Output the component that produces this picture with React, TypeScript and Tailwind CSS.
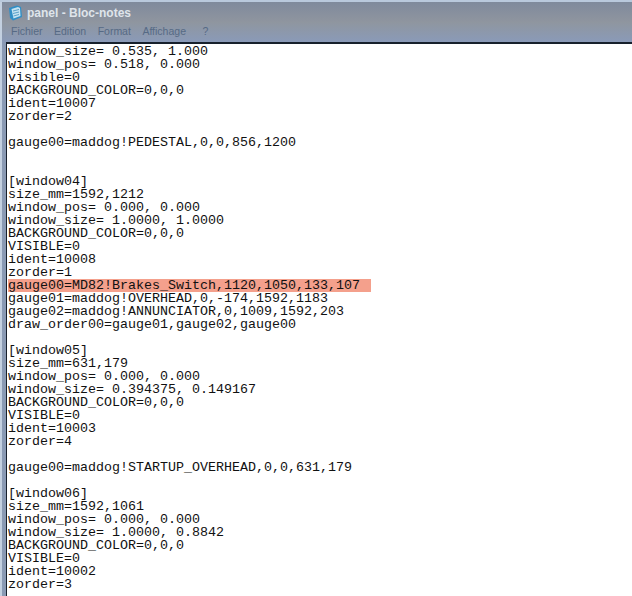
const LINES = [
  'window_size= 0.535, 1.000',
  'window_pos= 0.518, 0.000',
  'visible=0',
  'BACKGROUND_COLOR=0,0,0',
  'ident=10007',
  'zorder=2',
  '',
  'gauge00=maddog!PEDESTAL,0,0,856,1200',
  '',
  '',
  '[window04]',
  'size_mm=1592,1212',
  'window_pos= 0.000, 0.000',
  'window_size= 1.0000, 1.0000',
  'BACKGROUND_COLOR=0,0,0',
  'VISIBLE=0',
  'ident=10008',
  'zorder=1',
  'gauge00=MD82!Brakes_Switch,1120,1050,133,107',
  'gauge01=maddog!OVERHEAD,0,-174,1592,1183',
  'gauge02=maddog!ANNUNCIATOR,0,1009,1592,203',
  'draw_order00=gauge01,gauge02,gauge00',
  '',
  '[window05]',
  'size_mm=631,179',
  'window_pos= 0.000, 0.000',
  'window_size= 0.394375, 0.149167',
  'BACKGROUND_COLOR=0,0,0',
  'VISIBLE=0',
  'ident=10003',
  'zorder=4',
  '',
  'gauge00=maddog!STARTUP_OVERHEAD,0,0,631,179',
  '',
  '[window06]',
  'size_mm=1592,1061',
  'window_pos= 0.000, 0.000',
  'window_size= 1.0000, 0.8842',
  'BACKGROUND_COLOR=0,0,0',
  'VISIBLE=0',
  'ident=10002',
  'zorder=3',
]

const MENU = ['Fichier', 'Edition', 'Format', 'Affichage', '?']

function NotepadIcon() {
  return (
    <svg width="15" height="16" viewBox="0 0 15 16" className="shrink-0">
      <path d="M1 3 L9 0.5 L13 2 L14 12 L5 15.5 L2 13 Z" fill="#2f8ec6" />
      <path d="M3.5 4 L10 2 L12 3 L12.5 11 L5.5 13.5 Z" fill="#c4e3f2" />
      <path d="M5 6 L11 4.5 M5 8.5 L11 7 M5.5 11 L11 9.5" stroke="#5aa0c8" strokeWidth="1" />
    </svg>
  )
}

export default function App() {
  return (
    <div className="flex h-[596px] w-[632px] overflow-hidden bg-[#8a9ab4]">
      <div className="w-[2px] shrink-0 bg-[#c3d0e0]" />
      <div className="flex min-w-0 flex-1 flex-col">
        <div className="-ml-[2px] h-[2px] bg-[#b9c9dc]" />
        <div className="flex h-[20px] items-center gap-[4px] bg-gradient-to-b from-[#7f8a9c] to-[#8f959f] pt-[2px] pl-[6px] font-['Liberation_Sans',sans-serif] text-[12px] font-bold text-[#dfe4ea]">
          <NotepadIcon />
          <span>panel - Bloc-notes</span>
        </div>
        <div className="flex h-[20px] items-center gap-[11.5px] bg-gradient-to-b from-[#8f969f] to-[#8a9ab8] pl-[9px] font-['Liberation_Sans',sans-serif] text-[10.5px] text-[#566a85]">
          {MENU.map((item, idx) => (
            <span key={idx} className={idx === 4 ? 'ml-[5px]' : ''}>{item}</span>
          ))}
        </div>
        <div className="flex min-h-0 flex-1 pl-[4px]">
          <div className="min-w-0 flex-1 border-t-2 border-l border-[#17202c] bg-white pt-[1px] pl-[1px] font-['Liberation_Mono',monospace] text-[13.33px] leading-[13px] text-[#111111]">
            {LINES.map((line, idx) => (
              <div
                key={idx}
                className={`h-[13px] whitespace-pre ${line.includes('Brakes_Switch') ? 'w-[363px] bg-[#f4a08c]' : ''}`}
              >
                {line}
              </div>
            ))}
          </div>
        </div>
      </div>
    </div>
  )
}
